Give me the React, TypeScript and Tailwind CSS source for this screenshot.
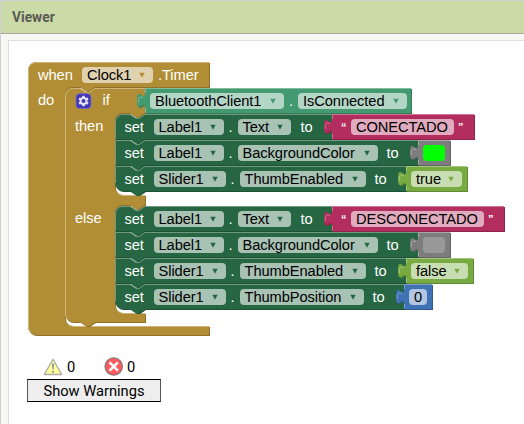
import React from 'react';

type Palette = { fill: string; light: string; dark: string };

const GOLD: Palette = { fill: '#b18e35', light: '#cdb57a', dark: '#8e722a' };
const FOREST: Palette = { fill: '#266643', light: '#70997f', dark: '#1e5236' };
const TEAL: Palette = { fill: '#439970', light: '#82bb9f', dark: '#367a5a' };
const PINK: Palette = { fill: '#b32d5e', light: '#cd7292', dark: '#8f244b' };
const GREY: Palette = { fill: '#7d7d7d', light: '#a8a8a8', dark: '#646464' };
const LIME: Palette = { fill: '#77ab41', light: '#a3c780', dark: '#5f8934' };
const BLUE: Palette = { fill: '#3f71b5', light: '#7f9fce', dark: '#325a91' };

const TAB_UP = 'V20 c0,-10 -8,8 -8,-7.5 s8,2.5 8,-7.5';

// Outline with its one pixel bevel: shadow, body and highlight.
function Shape({ d, hi, c }: { d: string; hi: string; c: Palette }) {
  return (
    <svg className="pointer-events-none absolute left-0 top-0 overflow-visible" width="1" height="1">
      <path d={d} fill={c.dark} transform="translate(1,1)" />
      <path d={d} fill={c.fill} />
      <path d={hi} fill="none" stroke={c.light} strokeWidth="1" />
    </svg>
  );
}

function Arrow({ color }: { color: string }) {
  return (
    <svg className="ml-auto mr-[8px] shrink-0" width="6" height="6" viewBox="0 0 6 6">
      <path d="M0.3 0.7h5.4L3 5.7z" fill={color} />
    </svg>
  );
}

function Field({ className, children, arrow }: { className: string; children: React.ReactNode; arrow?: string }) {
  return (
    <span className={`flex h-4 shrink-0 items-center rounded-[4px] pl-[5px] text-black ${className}`}>
      {children}
      {arrow && <Arrow color={arrow} />}
    </span>
  );
}

function Value({ place, w, c, children }: { place: string; w: number; c: Palette; children: React.ReactNode }) {
  return (
    <div className={`absolute flex h-[25px] items-center ${place}`}>
      <Shape
        d={`M0,0 H${w} V25 H0 ${TAB_UP} z`}
        hi={`M0.5,24.5 V20 M-6.5,15 C-7.5,9 -5,8.5 -2,9.5 M0.5,5 V0.5 H${w}`}
        c={c}
      />
      <div className="relative flex items-center">{children}</div>
    </div>
  );
}

function SetBlock({
  place, w, first, last, component, componentW, property, propertyW, gap,
}: {
  place: string; w: number; first?: boolean; last?: boolean; component: string;
  componentW: string; property: string; propertyW: string; gap: string;
}) {
  const start = first ? 'M0,8 A8,8 0 0 1 8,0 H15' : 'M0,0 H15';
  const end = last ? 'H8 A8,8 0 0 1 0,17 z' : 'H0 z';
  const hiStart = first ? `M0.5,${last ? 17 : 24.5} V8 A7.5,7.5 0 0 1 8,0.5 H15` : `M0.5,${last ? 17 : 24.5} V0.5 H15`;
  return (
    <div className={`absolute flex h-[25px] items-center text-white ${place}`}>
      <Shape
        d={`${start} l6,4 3,0 6,-4 H${w} V25 H30 l-6,4 -3,0 -6,-4 ${end}`}
        hi={`${hiStart} l6,4 3,0 6,-4 H${w}`}
        c={FOREST}
      />
      <div className="relative flex items-center">
        <span className="ml-[9.5px] w-[29px]">set</span>
        <Field className={`bg-[#a8c2b4] ${componentW}`} arrow="#266643">{component}</Field>
        <span className="w-[14px] pl-[5px]">.</span>
        <Field className={`bg-[#a8c2b4] ${propertyW}`} arrow="#266643">{property}</Field>
        <span className={gap}>to</span>
      </div>
    </div>
  );
}

function Quote({ children, className }: { children: string; className: string }) {
  return <span className={`text-[11px] font-bold leading-4 text-white ${className}`}>{children}</span>;
}

function Gear() {
  return (
    <svg className="absolute left-[75px] top-[93px]" width="17" height="16" viewBox="0 0 17 16">
      <rect x="1" y="0.7" width="15" height="14.8" rx="3.5" fill="#4037b5" stroke="#766fcb" strokeWidth="0.8" />
      <g fill="#e6e2f4" transform="translate(8.5 8)">
        <circle r="3.9" />
        {[0, 60, 120].map((a) => (
          <rect key={a} x="-1.3" y="-5.2" width="2.6" height="10.4" rx="0.4" transform={`rotate(${a})`} />
        ))}
        <circle r="2" fill="#4037b5" />
      </g>
    </svg>
  );
}

function Workspace() {
  return (
    <div className="absolute inset-0 whitespace-pre font-['Liberation_Sans',Arial,sans-serif] text-[14.667px] leading-[16px] tracking-[-0.07px] text-white">
      <div className="absolute left-[28px] top-[62px]">
        <Shape
          d="M0,8 A8,8 0 0 1 8,0 H181 V25 H67 l-6,4 -3,0 -6,-4 h-7 a8,8 0 0 0 -8,8 V256 a8,8 0 0 0 8,8 H181 V273 H8 A8,8 0 0 1 0,265 z"
          hi="M2.8,270.5 A7.5,7.5 0 0 1 0.5,265 V8 A7.5,7.5 0 0 1 8,0.5 H181 M39.5,261.7 A8.5,8.5 0 0 0 45,264.5 H181"
          c={GOLD}
        />
      </div>
      <div className="absolute left-[65px] top-[88px]">
        <Shape
          d="M0,8 A8,8 0 0 1 8,0 H15 l6,4 3,0 6,-4 H80 V5 c0,10 -8,-8 -8,7.5 s8,-2.5 8,7.5 V25 l-6,4 -3,0 -6,-4 h-7 a8,8 0 0 0 -8,8 V99 a8,8 0 0 0 8,8 H80 V117 l-6,4 -3,0 -6,-4 h-7 a8,8 0 0 0 -8,8 V217 a8,8 0 0 0 8,8 H80 V234 H30 l-6,4 -3,0 -6,-4 H8 A8,8 0 0 1 0,226 z"
          hi="M2.8,231.5 A7.5,7.5 0 0 1 0.5,226 V8 A7.5,7.5 0 0 1 8,0.5 H15 l6,4 3,0 6,-4 H80 M52.5,104.7 A8.5,8.5 0 0 0 58,107.5 H80 M52.5,222.7 A8.5,8.5 0 0 0 58,225.5 H80"
          c={GOLD}
        />
      </div>

      <div className="absolute left-[38px] top-[67px] flex items-center">
        <span className="w-[44px]">when</span>
        <Field className="w-[71px] bg-[#e0d2ae]" arrow="#b18e35">Clock1</Field>
        <span className="ml-[5px]">.Timer</span>
      </div>
      <span className="absolute left-[38px] top-[92px]">do</span>
      <Gear />
      <span className="absolute left-[102.5px] top-[92px]">if</span>
      <span className="absolute left-[75px] top-[118px]">then</span>
      <span className="absolute left-[75px] top-[210px]">else</span>

      <SetBlock place="left-[115px] top-[114px]" w={217} first component="Label1" componentW="w-[70px]" property="Text" propertyW="w-[53px]" gap="ml-[10px]" />
      <SetBlock place="left-[115px] top-[140px]" w={303} component="Label1" componentW="w-[70px]" property="BackgroundColor" propertyW="w-[140px]" gap="ml-[9px]" />
      <SetBlock place="left-[115px] top-[166px]" w={291} last component="Slider1" componentW="w-[72px]" property="ThumbEnabled" propertyW="w-[126px]" gap="ml-[9px]" />

      <SetBlock place="left-[115px] top-[206px]" w={217} first component="Label1" componentW="w-[70px]" property="Text" propertyW="w-[53px]" gap="ml-[10px]" />
      <SetBlock place="left-[115px] top-[232px]" w={303} component="Label1" componentW="w-[70px]" property="BackgroundColor" propertyW="w-[140px]" gap="ml-[9px]" />
      <SetBlock place="left-[115px] top-[258px]" w={291} component="Slider1" componentW="w-[72px]" property="ThumbEnabled" propertyW="w-[126px]" gap="ml-[9px]" />
      <SetBlock place="left-[115px] top-[284px]" w={289} last component="Slider1" componentW="w-[72px]" property="ThumbPosition" propertyW="w-[124px]" gap="ml-[9px]" />

      <Value place="left-[145px] top-[88px]" w={266} c={TEAL}>
        <Field className="ml-[5px] w-[134px] bg-[#b4d6c6]" arrow="#439970">BluetoothClient1</Field>
        <span className="w-[14px] pl-[5px]">.</span>
        <Field className="w-[109px] bg-[#b4d6c6]" arrow="#439970">IsConnected</Field>
      </Value>
      <Value place="left-[332px] top-[114px]" w={142} c={PINK}>
        <Quote className="ml-[9px] w-[10px]">“</Quote>
        <Field className="w-[103px] bg-[#e1abbf]">CONECTADO</Field>
        <Quote className="ml-[4px]">”</Quote>
      </Value>
      <Value place="left-[418px] top-[140px]" w={32} c={GREY}>
        <span className="ml-[5px] h-4 w-[22px] rounded-[4px] bg-[#00ff00]" />
      </Value>
      <Value place="left-[406px] top-[166px]" w={61} c={LIME}>
        <Field className="ml-[5px] w-[51px] bg-[#c9ddb3]" arrow="#77ab41">true</Field>
      </Value>

      <Value place="left-[332px] top-[206px]" w={172} c={PINK}>
        <Quote className="ml-[9px] w-[10px]">“</Quote>
        <Field className="w-[133px] bg-[#e1abbf]">DESCONECTADO</Field>
        <Quote className="ml-[4px]">”</Quote>
      </Value>
      <Value place="left-[418px] top-[232px]" w={32} c={GREY}>
        <span className="ml-[5px] h-4 w-[22px] rounded-[4px] bg-[#999999]" />
      </Value>
      <Value place="left-[406px] top-[258px]" w={67} c={LIME}>
        <Field className="ml-[5px] w-[57px] bg-[#c9ddb3]" arrow="#77ab41">false</Field>
      </Value>
      <Value place="left-[404px] top-[284px]" w={28} c={BLUE}>
        <Field className="ml-[5px] w-[18px] bg-[#b2c6e1]">0</Field>
      </Value>
    </div>
  );
}

function Warnings() {
  return (
    <div className="relative mb-[22px] ml-[18px] mt-auto w-[134px] font-[Roboto,sans-serif] text-[14.667px] text-black">
      <div className="flex h-[24px] items-center pl-[16px]">
        <svg width="20" height="18" viewBox="0 0 20 18" className="shrink-0">
          <path d="M10 1.2 18.7 16.5H1.3z" fill="#ffff99" stroke="#aaa" strokeWidth="1.3" strokeLinejoin="round" />
          <path d="M8.8 5.5h2.4l-.6 6h-1.2zM9 12.8h2v2H9z" fill="#999" />
        </svg>
        <span className="ml-[4px] w-[37px]">0</span>
        <svg width="20" height="20" viewBox="0 0 20 20" className="shrink-0">
          <circle cx="9.7" cy="9.5" r="8.7" fill="#ff5a5f" stroke="#777" strokeWidth="1.1" />
          <path d="m5.6 5.4 8.2 8.2M13.8 5.4l-8.2 8.2" stroke="#fff" strokeWidth="2.6" />
        </svg>
        <span className="ml-[3px]">0</span>
      </div>
      <button className="block h-[23px] w-[134px] border border-x-[#555] border-y-black bg-[#eee] leading-[22px]">
        Show Warnings
      </button>
    </div>
  );
}

export default function App() {
  return (
    <div className="flex h-[424px] w-[524px] flex-col overflow-hidden border-l border-t border-[#cfcdd3] bg-[#f7f8f3]">
      <header className="flex h-[33px] shrink-0 items-center border-b border-[#aaa79f] bg-[#cbdba8] pl-[11px] pt-[2px] font-[Roboto,sans-serif] text-[15.5px] font-bold text-[#5a5a55]">
        <span className="origin-left scale-x-[0.89]">Viewer</span>
      </header>
      <main className="relative ml-[7px] mt-[6px] flex flex-1 flex-col border-l border-t border-[#dddedf] bg-white">
        <div className="absolute -left-[9px] -top-[41px]">
          <Workspace />
        </div>
        <Warnings />
      </main>
    </div>
  );
}
